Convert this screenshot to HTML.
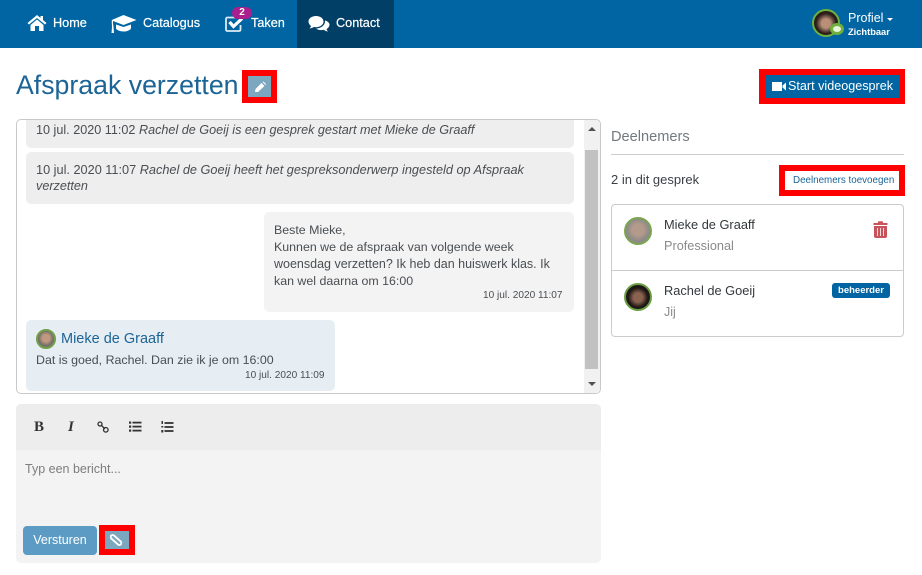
<!DOCTYPE html>
<html><head><meta charset="utf-8">
<style>
html,body{margin:0;padding:0;background:#fff}
body{width:922px;height:575px;overflow:hidden;position:relative;font-family:"Liberation Sans",sans-serif;color:#3a3f44;font-size:12.5px}
.a{position:absolute;white-space:nowrap}
.nav{left:0;top:0;width:922px;height:48px;background:#0065a2}
.nt{color:#fff;font-size:12.7px;top:16px;line-height:14px;-webkit-text-stroke:.2px #fff}
.bub{position:absolute;border-radius:5px}
.t{position:absolute;white-space:nowrap;font-size:12.4px;line-height:17px;color:#4a4e52}
.s{font-size:12.64px}
.red{position:absolute;background:#fff;border:5px solid #f00;box-sizing:border-box}
</style></head><body>
<div class="a nav"></div>
<div class="a" style="left:297px;top:0;width:97px;height:48px;background:#023f66"></div>
<svg class="a" style="left:27px;top:14px" width="20" height="18" viewBox="0 0 20 18"><path d="M10 1 0.5 9 2 10.500 10 4 18 10.500 19.500 9 16 6V2h-2.500v2Z M3.500 11 10 5.500 16.500 11V17H12V12H8V17H3.500Z" fill="#fff"/></svg>
<div class="a nt" style="left:53px">Home</div>
<svg class="a" style="left:110px;top:14px" width="27" height="20" viewBox="0 0 27 20"><path d="M13.500 1 26.500 6 13.500 11 3 7V9L3.500 13 4 19H1.500L2 13 1.800 9V6Z" fill="#fff"/><path d="M6 10.500 13.500 13 21 10.500V14C21 16 17 17.500 13.500 17.500S6 16 6 14Z" fill="#fff"/></svg>
<div class="a nt" style="left:143px">Catalogus</div>
<svg class="a" style="left:225px;top:14px" width="20" height="19" viewBox="0 0 20 19"><path d="M13 3.500H2.500Q1 3.500 1 5V15.500Q1 17 2.500 17H14Q15.500 17 15.500 15.500V11" fill="none" stroke="#dceaf3" stroke-width="1.800"/><path d="M4.500 8 8.500 12.500 17 4.500" fill="none" stroke="#fff" stroke-width="3.200"/></svg>
<div class="a" style="left:232px;top:7px;width:20px;height:12px;border-radius:7px;background:#a81f8d;color:#fff;font-size:10px;font-weight:bold;line-height:12px;text-align:center">2</div>
<div class="a nt" style="left:251px">Taken</div>
<svg class="a" style="left:308px;top:15px" width="22" height="19" viewBox="0 0 22 19"><path d="M8 1C3.500 1 .5 3.500 .5 6.500 .5 8.500 1.700 10 3 11 2.800 12 2.200 12.700 1.500 13.500 3.500 13.300 5 12.500 6 12 10.500 13 15.500 10.500 15.500 6.500 15.500 3.500 12.500 1 8 1Z" fill="#fff"/><path d="M17 5.500C17.500 10 13 13.500 8 13.500 10 15 13 15.500 15.500 14.800 16.500 15.500 18 16.300 20 16.500 19.300 15.700 18.800 15 18.500 14 20.500 13 21.500 11 21.500 9.500 21.500 8 19.500 6 17 5.500Z" fill="#fff"/></svg>
<div class="a nt" style="left:336px">Contact</div>
<div class="a" style="left:812px;top:9px;width:28px;height:28px;border-radius:50%;background:radial-gradient(circle at 50% 52%,#b98f78 0 26%,#2a1d1a 58%);border:2px solid #6fb03f;box-sizing:border-box"></div>
<div class="a" style="left:830px;top:23px;width:14px;height:12px;border-radius:50%;background:#6fb03f"></div>
<div class="a" style="left:833px;top:26px;width:8px;height:6px;border-radius:50%;background:#e8f5dc"></div>
<div class="a" style="left:848px;top:11px;color:#fff;font-size:12.500px;line-height:14px">Profiel</div>
<div class="a" style="left:887px;top:18px;width:0;height:0;border-left:3px solid transparent;border-right:3px solid transparent;border-top:3px solid #fff"></div>
<div class="a" style="left:848px;top:27px;color:#fff;font-size:9.300px;line-height:11px;font-weight:bold">Zichtbaar</div>

<div class="a" style="left:16px;top:70px;font-size:26.700px;line-height:30px;color:#1b6496">Afspraak verzetten</div>
<div class="red" style="left:242px;top:70px;width:35px;height:33px;border-width:6px;background:#7ba7bf"></div>
<svg class="a" style="left:254px;top:81px" width="13" height="12" viewBox="0 0 13 12"><path d="M1 11 1.500 8 7.500 2 10.500 5 4 11Z M8.500 1 9.500 .5 12 3 11.500 4Z" fill="#fff"/></svg>
<div class="red" style="left:759px;top:69px;width:146px;height:35px;border-width:6px;background:#0065a2"></div>
<svg class="a" style="left:772px;top:81px" width="15" height="11" viewBox="0 0 15 11"><path d="M0 1H10V10H0Z M10.500 4.500 14 1.500V9.500L10.500 6.500Z" fill="#fff"/></svg>
<div class="a" style="left:788px;top:79px;color:#fff;font-size:12.600px;line-height:15px">Start videogesprek</div>

<!-- chat -->
<div class="a" style="left:16px;top:119px;width:585px;height:275px;border:1px solid #c9c9c9;border-radius:5px;box-sizing:border-box;overflow:hidden;background:#fff"></div>
<div class="bub" style="left:26px;top:120px;width:548px;height:28px;background:#eee;border-radius:0 0 5px 5px"></div>
<div class="t s" style="left:36px;top:122px">10 jul. 2020 11:02 <i>Rachel de Goeij is een gesprek gestart met Mieke de Graaff</i></div>
<div class="bub" style="left:26px;top:152px;width:548px;height:52px;background:#eee"></div>
<div class="t" style="left:36px;top:161px;font-size:12.730px">10 jul. 2020 11:07 <i>Rachel de Goeij heeft het gespreksonderwerp ingesteld op Afspraak</i></div>
<div class="t s" style="left:36px;top:178px"><i>verzetten</i></div>
<div class="bub" style="left:264px;top:212px;width:310px;height:100px;background:#f3f3f3"></div>
<div class="t" style="left:274px;top:222px">Beste Mieke,</div>
<div class="t" style="left:274px;top:239px">Kunnen we de afspraak van volgende week</div>
<div class="t" style="left:274px;top:256px;font-size:12.500px">woensdag verzetten? Ik heb dan huiswerk klas. Ik</div>
<div class="t" style="left:274px;top:273px">kan wel daarna om 16:00</div>
<div class="a" style="left:483px;top:290px;font-size:10.100px;line-height:12px;color:#4a4e52">10 jul. 2020 11:07</div>
<div class="bub" style="left:26px;top:320px;width:309px;height:71px;background:#e7eef3"></div>
<div class="a" style="left:36px;top:329px;width:20px;height:20px;border-radius:50%;background:radial-gradient(circle at 50% 45%,#c09a80 0 30%,#77706a 60%);border:2px solid #6fa04a;box-sizing:border-box"></div>
<div class="a" style="left:61px;top:331px;font-size:14.500px;line-height:17px;color:#1b6496">Mieke de Graaff</div>
<div class="t" style="left:36px;top:352px">Dat is goed, Rachel. Dan zie ik je om 16:00</div>
<div class="a" style="left:245px;top:370px;font-size:10.100px;line-height:12px;color:#4a4e52">10 jul. 2020 11:09</div>
<!-- scrollbar -->
<div class="a" style="left:584px;top:120px;width:16px;height:273px;background:#f1f1f1;border-radius:0 5px 5px 0"></div>
<div class="a" style="left:585px;top:150px;width:13px;height:219px;background:#c1c1c1"></div>
<div class="a" style="left:588px;top:127px;width:0;height:0;border-left:4px solid transparent;border-right:4px solid transparent;border-bottom:4px solid #505050"></div>
<div class="a" style="left:588px;top:382px;width:0;height:0;border-left:4px solid transparent;border-right:4px solid transparent;border-top:4px solid #505050"></div>

<!-- editor -->
<div class="a" style="left:16px;top:404px;width:585px;height:159px;background:#f3f3f3;border-radius:5px"></div>
<div class="a" style="left:16px;top:404px;width:585px;height:46px;background:#ededed;border-radius:5px 5px 0 0"></div>
<div class="a" style="left:34px;top:419px;font:bold 15px/16px 'Liberation Serif',serif;color:#333">B</div>
<div class="a" style="left:68px;top:419px;font:italic bold 15px/16px 'Liberation Serif',serif;color:#333">I</div>
<svg class="a" style="left:97px;top:421px" width="12" height="12" viewBox="0 0 12 12"><g fill="none" stroke="#333" stroke-width="1.300"><circle cx="3" cy="3" r="2"/><circle cx="8.800" cy="8.800" r="2.300"/><path d="M4 4 8 8"/></g></svg>
<svg class="a" style="left:129px;top:421px" width="13" height="11" viewBox="0 0 13 11"><g fill="#333"><rect x="0" y="0.500" width="2.200" height="2.200"/><rect x="0" y="4.500" width="2.200" height="2.200"/><rect x="0" y="8.500" width="2.200" height="2.200"/><rect x="3.500" y="0.700" width="9" height="1.800"/><rect x="3.500" y="4.700" width="9" height="1.800"/><rect x="3.500" y="8.700" width="9" height="1.800"/></g></svg>
<svg class="a" style="left:161px;top:421px" width="13" height="12" viewBox="0 0 13 12"><g fill="#333"><rect x="0.500" y="0" width="1.500" height="3"/><rect x="0.300" y="5" width="2" height="1.500"/><rect x="0.300" y="9" width="2" height="2.500"/><rect x="3.500" y="1.100" width="9" height="1.800"/><rect x="3.500" y="5.100" width="9" height="1.800"/><rect x="3.500" y="9.100" width="9" height="1.800"/></g></svg>
<div class="a" style="left:25px;top:461px;font-size:12.500px;line-height:16px;color:#7d7d7d">Typ een bericht...</div>
<div class="a" style="left:23px;top:526px;width:74px;height:29px;border-radius:4px;background:#5b9bc4;color:#fff;font-size:12.500px;line-height:29px;text-align:center">Versturen</div>
<div class="red" style="left:99px;top:525px;width:36px;height:30px;border-width:6px;background:#7ba7bf"></div>
<svg class="a" style="left:110px;top:534px" width="12" height="12" viewBox="0 0 13 13"><rect x="-.5" y="4.300" width="14" height="4.400" rx="2.200" transform="rotate(42 6.500 6.500)" fill="none" stroke="#fff" stroke-width="2"/></svg>

<!-- right -->
<div class="a" style="left:611px;top:129px;font-size:14.600px;line-height:17px;color:#74797d">Deelnemers</div>
<div class="a" style="left:611px;top:154px;width:293px;height:1px;background:#ccc"></div>
<div class="a" style="left:611px;top:172px;font-size:13px;line-height:16px;color:#3a3f44">2 in dit gesprek</div>
<div class="red" style="left:779px;top:165px;width:126px;height:31px;border-width:6px"></div>
<div class="a" style="left:793px;top:175px;font-size:9.800px;line-height:12px;color:#1b6496">Deelnemers toevoegen</div>
<div class="a" style="left:611px;top:204px;width:293px;height:133px;border:1px solid #ccc;border-radius:4px;box-sizing:border-box"></div>
<div class="a" style="left:612px;top:270px;width:291px;height:1px;background:#ccc"></div>
<div class="a" style="left:624px;top:217px;width:28px;height:28px;border-radius:50%;background:radial-gradient(circle at 50% 45%,#b39a8a 0 32%,#8d8a87 62%);border:2px solid #7ba651;box-sizing:border-box"></div>
<div class="a" style="left:664px;top:217px;font-size:12.800px;line-height:16px;color:#33383c">Mieke de Graaff</div>
<div class="a" style="left:664px;top:238px;font-size:12.700px;line-height:16px;color:#8a8a8a">Professional</div>
<svg class="a" style="left:873px;top:221px" width="15" height="17" viewBox="0 0 15 17"><path d="M5 2V1Q5 .3 6 .3H9Q10 .3 10 1V2H14.500V4H.5V2Z M1 5H14V15Q14 17 12 17H3Q1 17 1 15Z" fill="#c9535a"/><path d="M4.500 7V15 M7.500 7V15 M10.500 7V15" stroke="#f3d9da" stroke-width="1"/></svg>
<div class="a" style="left:624px;top:283px;width:28px;height:28px;border-radius:50%;background:radial-gradient(circle at 50% 52%,#8a6350 0 26%,#1f1715 56%);border:2px solid #6a9f45;box-sizing:border-box"></div>
<div class="a" style="left:664px;top:283px;font-size:12.800px;line-height:16px;color:#33383c">Rachel de Goeij</div>
<div class="a" style="left:664px;top:304px;font-size:12.500px;line-height:16px;color:#8a8a8a">Jij</div>
<div class="a" style="left:832px;top:283px;width:58px;height:15px;border-radius:3px;background:#0065a2;color:#fff;font-size:9.500px;font-weight:bold;line-height:15px;text-align:center">beheerder</div>
</body></html>
